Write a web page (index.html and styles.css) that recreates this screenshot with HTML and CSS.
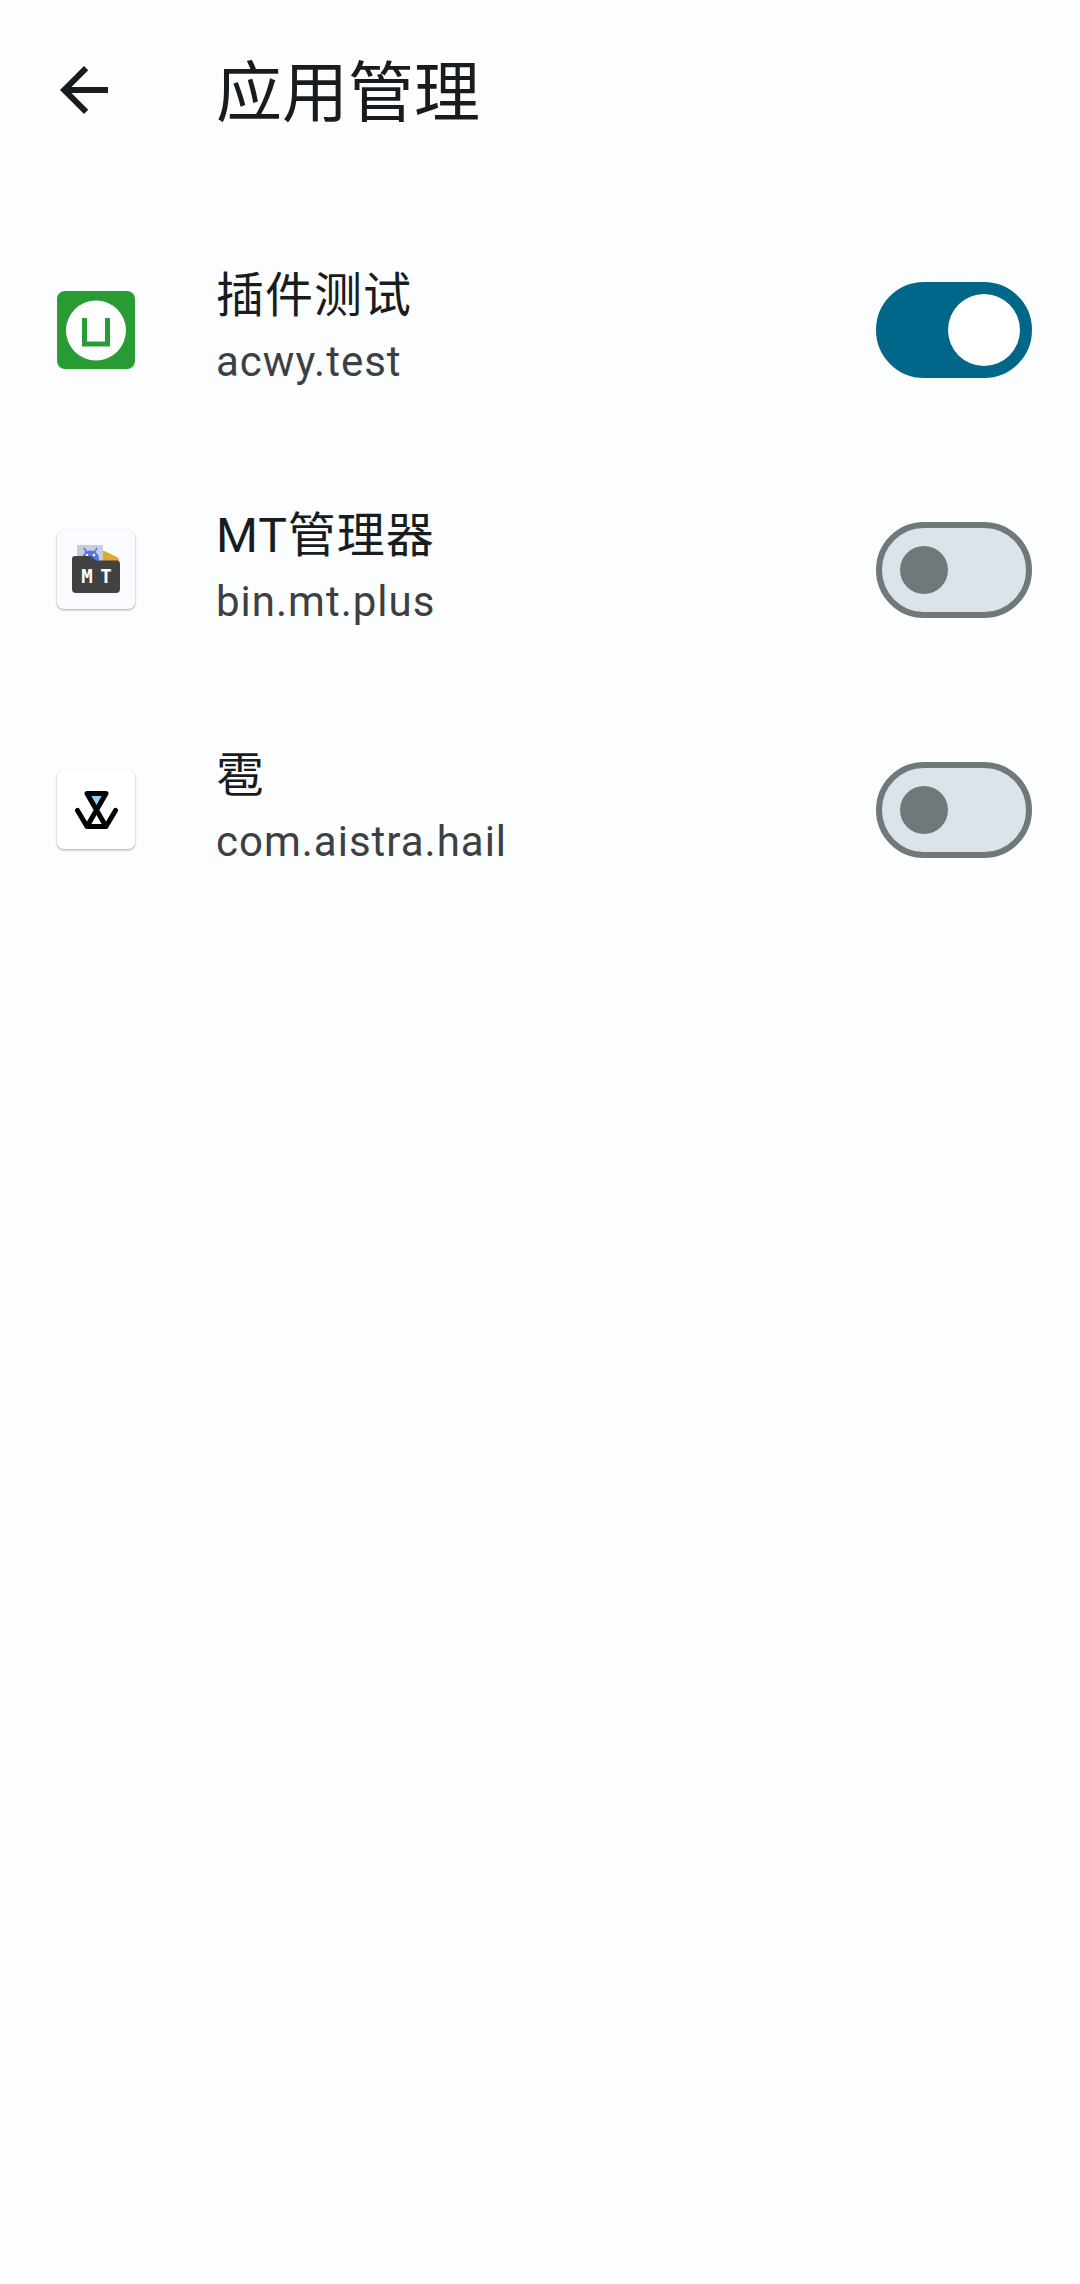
FILE: index.html
```html
<!DOCTYPE html>
<html lang="zh-CN">
<head>
<meta charset="utf-8">
<meta name="viewport" content="width=device-width">
<title>应用管理</title>
<link rel="stylesheet" href="styles.css">
</head>
<body>
<header class="app-bar">
  <button class="back" type="button" aria-label="返回">
    <svg viewBox="0 0 24 24" aria-hidden="true"><path fill="currentColor" d="M20 11H7.83l5.59-5.59L12 4l-8 8 8 8 1.41-1.41L7.83 13H20z"/></svg>
  </button>
  <h1 class="title">应用管理</h1>
</header>
<main>
  <ul class="apps">
    <li>
      <label class="app">
        <svg class="app-icon" viewBox="0 0 96 96" aria-hidden="true">
          <rect x="9" y="9" width="78" height="78" rx="8" fill="#289b35"/>
          <circle cx="48" cy="48.500" r="30" fill="#fff"/>
          <path d="M36.500 36V62H59.500V36" fill="none" stroke="#289b35" stroke-width="5"/>
        </svg>
        <span class="app-text">
          <span class="name">插件测试</span>
          <span class="package">acwy.test</span>
        </span>
        <input class="switch" type="checkbox" role="switch" checked>
      </label>
    </li>
    <li>
      <label class="app">
        <svg class="app-icon" viewBox="0 0 96 96" aria-hidden="true">
          <rect class="plate" x="9" y="8" width="78" height="79" rx="7" fill="#fafbfe"/>
          <path d="M54 28L69 35Q71 36 71 38V44H54z" fill="#e0a62f"/>
          <path d="M29 24Q29 23 30 23H53Q55 23 55 25V42H29z" fill="#c9cddb"/>
          <path d="M34 37a8.500 8.500 0 0 1 17 0v5H34z" fill="#4c78e6"/>
          <path d="M36 26l3 5M49 26l-3 5" stroke="#4c78e6" stroke-width="1.500"/>
          <circle cx="39" cy="33" r="1.300" fill="#fff"/><circle cx="46" cy="33" r="1.300" fill="#fff"/>
          <path d="M27 34H41Q43 34 45 36L48 38.500H69Q72 38.500 72 42V67Q72 71 68 71H28Q24 71 24 67V37Q24 34 27 34z" fill="#424242"/>
          <text class="folder-text" x="39" y="61">M</text>
          <text class="folder-text" x="58" y="61">T</text>
        </svg>
        <span class="app-text">
          <span class="name">MT管理器</span>
          <span class="package">bin.mt.plus</span>
        </span>
        <input class="switch" type="checkbox" role="switch">
      </label>
    </li>
    <li>
      <label class="app">
        <svg class="app-icon" viewBox="0 0 96 96" aria-hidden="true">
          <rect class="plate" x="9" y="8" width="78" height="79" rx="7" fill="#fff"/>
          <path d="M39 31.500H58L48.500 47z" fill="#8fd0f8"/>
          <path d="M29.500 48.500L39 64.500H58L67.500 48.500M39 64.500L58 31.500H39L58 64.500" fill="none" stroke="#000" stroke-width="5" stroke-linecap="round" stroke-linejoin="round"/>
        </svg>
        <span class="app-text">
          <span class="name">雹</span>
          <span class="package">com.aistra.hail</span>
        </span>
        <input class="switch" type="checkbox" role="switch">
      </label>
    </li>
  </ul>
</main>
</body>
</html>
```
FILE: styles.css
```css
* {
  box-sizing: border-box;
}

body {
  margin: 0;
  min-height: 100vh;
  background: #fcfdff;
  color: #191c1e;
  font-family: Roboto, "Noto Sans CJK SC", sans-serif;
}

.app-bar {
  display: flex;
  align-items: center;
  gap: 96px;
  height: 180px;
  padding: 0 48px;
}

.back {
  width: 72px;
  height: 72px;
  padding: 0;
  border: 0;
  background: none;
  color: inherit;
}

.back svg {
  display: block;
}

.title {
  margin: 0;
  padding-top: 8px;
  font-size: 66px;
  font-weight: 400;
  line-height: 84px;
}

.apps {
  margin: 0;
  padding: 30px 0 0;
  list-style: none;
}

.app {
  display: flex;
  align-items: center;
  min-height: 240px;
  padding: 0 48px;
}

.app-icon {
  flex: none;
  width: 96px;
  height: 96px;
  margin-right: 72px;
}

.plate {
  filter: drop-shadow(0 1px 1px rgb(0 0 0 / 35%));
}

.folder-text {
  fill: #fff;
  font: bold 19px "DejaVu Sans Mono", monospace;
  text-anchor: middle;
}

.app-text {
  display: flex;
  flex: 1;
  flex-direction: column;
  min-width: 0;
  padding-bottom: 8px;
}

.name {
  font-size: 48px;
  line-height: 72px;
  letter-spacing: 1px;
}

.package {
  color: #3c4043;
  font-size: 42px;
  line-height: 60px;
  letter-spacing: 1px;
}

.switch {
  display: grid;
  flex: none;
  align-items: center;
  width: 156px;
  height: 96px;
  margin: 0;
  padding: 0 18px;
  border: 6px solid #6f797a;
  border-radius: 48px;
  background: #dce3ea;
  appearance: none;
}

.switch::before {
  width: 48px;
  height: 48px;
  border-radius: 50%;
  background: #6f797a;
  content: "";
}

.switch:checked {
  justify-items: end;
  padding: 0 6px;
  border-color: #00668a;
  background: #00668a;
}

.switch:checked::before {
  width: 72px;
  height: 72px;
  background: #fff;
}
```
